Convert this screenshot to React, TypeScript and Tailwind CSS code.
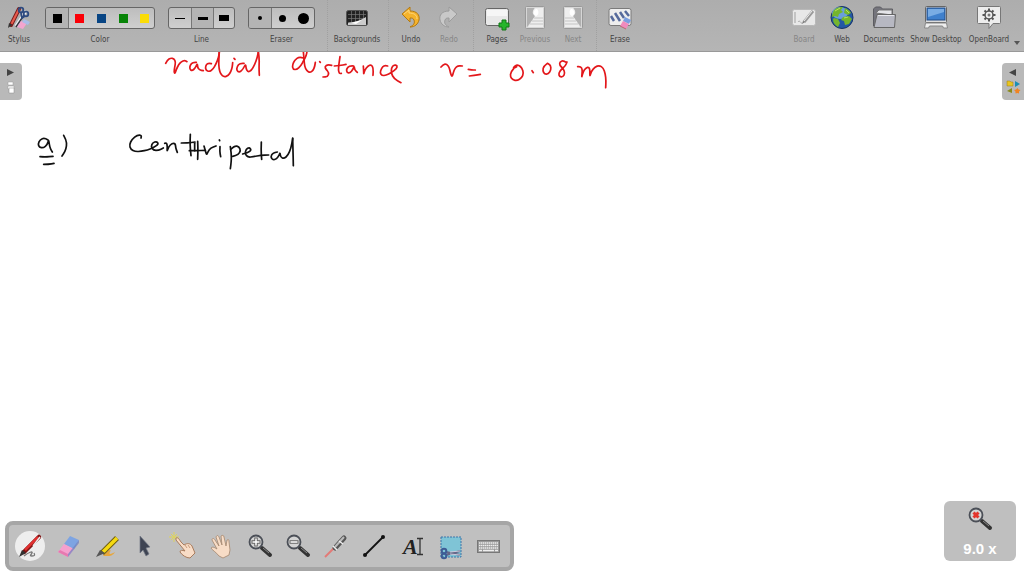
import type { ReactNode } from 'react'

type Point = [number, number]

interface Stroke {
  color: string
  points: Point[]
}

// Pen strokes are recorded as "x,y x,y ..." in thirds of a board pixel, relative to the origin of their line
function record(color: string, ox: number, oy: number, lines: string[]): Stroke[] {
  return lines.map(line => ({
    color,
    points: line.split(' ').map(p => {
      const [x, y] = p.split(',').map(Number)
      return [ox + x / 3, oy + y / 3] as Point
    }),
  }))
}

const STROKES: Stroke[] = [
  ...record('#e3171b', 150, 48, [
    '47,46 52,36 62,30 72,32 77,42 74,58 72,72 75,77 79,64 86,50 94,41 104,37 111,41',
    '139,43 129,42 120,52 119,63 126,69 136,60 142,46 143,58 148,66 160,68',
    '184,47 173,44 166,56 168,67 178,71 189,64 198,48 206,28 208,10',
    '208,10 206,40 207,62 212,79 222,87 235,83 243,70 247,56 248,44',
    '252,31 255,34',
    '282,46 270,45 261,56 260,68 268,73 279,64 287,47 288,62 294,72 304,68 314,50 322,28 325,10',
    '325,10 328,30 327,60 328,82',
    '460,30 448,26 434,36 427,52 429,64 440,65 452,54 461,38 469,22 471,10',
    '460,10 462,34 464,56 470,68 480,74 489,68 494,56 496,43',
    '509,41 511,43',
    '545,52 534,49 524,56 528,64 537,74 533,86 519,87',
    '570,26 567,46 565,66 568,77 574,76',
    '553,54 570,53 588,49',
    '611,54 598,53 589,63 591,74 600,75 609,64 613,54 614,66 622,73',
    '640,54 641,68 641,80 644,66 654,54 664,50 670,60 669,82',
    '713,54 703,51 694,62 690,74 696,83 708,82 724,74 740,62 742,53 732,50 724,60 724,76 732,92 753,104',
  ]),
  ...record('#e3171b', 420, 48, [
    '63,57 70,49 80,48 88,58 91,74 96,88 100,74 105,60 114,53 127,54',
    '145,64 156,66 166,66',
    '148,84 164,82 181,79',
    '281,62 272,72 271,86 278,96 292,98 305,90 311,76 306,60 296,51 286,52 278,62 290,56',
    '336,68 340,74',
    '382,46 371,54 368,68 374,79 385,78 393,66 392,52 382,46',
    '440,44 430,37 419,42 419,52 430,62 435,76 429,87 418,86 416,76 424,64 436,54 441,42',
    '473,56 482,55 487,64 486,78 485,89 489,72 498,59 507,57 510,68 509,87 514,70 525,57 538,52 550,60 556,78 558,98 557,119',
  ]),
  ...record('#111111', 20, 120, [
    '84,60 74,53 60,59 54,72 58,82 70,84 82,74 86,58 88,74 91,86 97,96',
    '60,110 76,111 99,109',
    '71,133 86,133 102,130',
    '131,46 139,60 140,78 135,95 126,108',
    '363,54 366,46 352,45 336,58 328,74 332,88 346,95 364,94 382,90 402,82 416,72 410,64 398,68 393,80 400,91 416,91 430,84',
    '434,70 440,68 442,80 441,96 446,80 456,70 466,70 467,84 472,97',
    '511,43 510,64 511,86 513,107',
    '484,69 504,69 525,66',
    '533,64 534,84 533,118',
    '508,92 530,92 556,91',
    '524,70 524,92',
    '552,78 556,92 560,106 564,94 572,84 588,78',
    '600,80 599,94 602,110',
    '598,60 599,62',
    '631,80 634,100 634,124 631,146',
    '632,88 644,77 657,80 662,92 655,104 638,109',
    '668,102 684,98 694,90 688,82 678,88 675,102 684,112 700,110 722,106 746,105',
    '724,66 723,90 725,118',
    '772,96 758,99 752,110 758,120 770,117 778,104 780,98 782,112 792,116 804,106 813,84 818,56',
    '818,54 819,90 820,137',
  ]),
]

function toPath(points: Point[]) {
  let d = `M${points[0][0]} ${points[0][1]}`
  for (let i = 1; i < points.length - 1; i++) {
    const [x, y] = points[i]
    const [nx, ny] = points[i + 1]
    d += `Q${x} ${y} ${(x + nx) / 2} ${(y + ny) / 2}`
  }
  const [lx, ly] = points[points.length - 1]
  return `${d}L${lx} ${ly}`
}

function Icon({ children, size = 26 }: { children: ReactNode; size?: 26 | 32 }) {
  return (
    <svg viewBox={`0 0 ${size} ${size}`} className={size === 26 ? 'size-[26px]' : 'size-8'} fill="none" aria-hidden="true">
      {children}
    </svg>
  )
}

const StylusIcon = () => (
  <Icon>
    <path d="M13 4L5 20" stroke="#7b2020" strokeWidth="4" strokeLinecap="round" />
    <path d="M13 4L6 18" stroke="#e85a4c" strokeWidth="2" strokeLinecap="round" />
    <path d="M3 18l-1 5 4-3z" fill="#333" />
    <path d="M20 6L10 21" stroke="#eef1f6" strokeWidth="3" />
    <path d="M18 10l-8 12" stroke="#33343c" strokeWidth="1.500" />
    <circle cx="15" cy="5" r="2.300" stroke="#2d4a80" strokeWidth="1.800" />
    <circle cx="20" cy="9" r="2.300" stroke="#2d4a80" strokeWidth="1.800" />
    <path d="M15 8l1 5 3-2" stroke="#2d4a80" strokeWidth="1.800" />
    <path d="M15 16l6 2-4 6-6-2z" fill="#f3a5cf" />
    <path d="M18 14l6 3-2 3-6-3z" fill="#a9bde8" />
  </Icon>
)

const BackgroundsIcon = () => (
  <Icon>
    <rect x="2.500" y="5.500" width="21" height="15" rx="2" fill="#222" stroke="#555" />
    <path d="M4 9.500h18M4 13.500h18M4 17.500h18M7.500 6v14M11.500 6v14M15.500 6v14M19.500 6v14" stroke="#777" strokeWidth=".7" />
    <path d="M4 20v-2c5-1 12-2 18-6v8z" fill="#ccc" />
    <path d="M7 18l11-3-6 4z" fill="#fff" />
  </Icon>
)

const ARROW = 'M4 9l8-7v4c7 0 10 4 9 9-1 4-4 7-9 7 4-2 5-4 4-7-1-2-2-2-4-2v4z'

const UndoIcon = () => (
  <Icon>
    <path d={ARROW} fill="#f5b32c" stroke="#b27812" strokeLinejoin="round" />
    <path d="M6 9l5-4v3c5 0 8 2 8 6" stroke="#ffd77c" />
  </Icon>
)

const RedoIcon = () => (
  <Icon>
    <path d={ARROW} transform="matrix(-1 0 0 1 25 0)" fill="#c9c9c9" stroke="#9c9c9c" strokeLinejoin="round" />
  </Icon>
)

const PagesIcon = () => (
  <Icon>
    <rect x="1.500" y="3.500" width="23" height="17" rx="2" fill="#e8e8e8" stroke="#666" />
    <path d="M3 5h20v6H3z" fill="#f6f6f6" />
    <path d="M18 15h4v3h3v4h-3v3h-4v-3h-3v-4h3z" fill="#25b52b" stroke="#127716" />
  </Icon>
)

function PageStepIcon({ flip }: { flip?: boolean }) {
  return (
    <Icon>
      <g transform={flip ? 'matrix(-1 0 0 1 26 0)' : undefined}>
        <rect x="3.500" y="1.500" width="19" height="22" rx="1" fill="#d6d6d6" stroke="#999" />
        <path d="M5 3h8c-3 3-1 6 1 7L5 22z" fill="#b0b0b0" />
        <path d="M13 3h8v19H6l7-11c-3-2-3-5 0-8z" fill="#eee" />
        <path d="M12 13h9M10 16h11M8 19h13" stroke="#c4c4c4" />
        <path d="M14 4c-3 2-3 6 0 7 3-1 3-5 1-7z" fill="#fff" />
      </g>
    </Icon>
  )
}

const EraseIcon = () => (
  <Icon>
    <rect x="2" y="3.500" width="22" height="17" rx="2" fill="#eee" stroke="#7a7a7a" />
    <path d="M4 11l3 5M8 8l5 8M13 7l4 6M18 6l4 5" stroke="#566a9c" strokeWidth="2.500" />
    <path d="M18 12l6 3-2 4-6-3z" fill="#7b9ee0" />
    <path d="M16 16l6 3-3 5-6-3z" fill="#f08bbd" />
    <path d="M13 21l6 3" stroke="#a55" strokeWidth=".7" />
  </Icon>
)

const BoardIcon = () => (
  <Icon>
    <rect x="1.500" y="4.500" width="23" height="16" rx="2" fill="#e8e8e8" stroke="#b8b8b8" />
    <path d="M4 7v11" stroke="#c4c4c4" strokeWidth="2" />
    <path d="M22 6L13 17" stroke="#999" strokeWidth="3" />
    <path d="M21 6L13 16" stroke="#eee" />
    <path d="M12 16l-1 3 3-2z" fill="#777" />
    <path d="M7 17c2-3 3 3 5 1" stroke="#aaa" />
  </Icon>
)

const WebIcon = () => (
  <Icon>
    <circle cx="13" cy="12.500" r="11" fill="#2358a5" stroke="#183466" />
    <ellipse cx="11" cy="8" rx="8" ry="6" fill="#6a9edb" />
    <path d="M5 5c3-3 6-3 9-3l-2 3 2 2-4 2-1 3-3-1-3 1c0-3 1-5 2-7zM16 3c3 1 5 3 6 5l-3 2-4-2zM14 12l6-1 3 3-3 5-4 1-1-4-3-1zM5 13l4 1 2 4-2 4c-3-2-5-4-5-8z" fill="#75b52d" />
    <path d="M6 6l5-3M17 5l3 3M15 13l4-1" stroke="#b9df5e" />
  </Icon>
)

const DocumentsIcon = () => (
  <Icon>
    <path d="M2.500 21V4l2-2h5l2 2h10v16z" fill="#74747c" stroke="#5c5c62" />
    <path d="M5 8l3-3h13v5z" fill="#e4e4e8" stroke="#777" />
    <path d="M3 22.500l3-13h18.500l-1 13z" fill="#b7b8c2" stroke="#666" />
    <path d="M7 10.500h16" stroke="#e8e8ee" />
  </Icon>
)

const DesktopIcon = () => (
  <Icon>
    <rect x="2.500" y="1.500" width="21" height="16" rx="1" fill="#ddd" stroke="#666" />
    <rect x="4" y="3" width="18" height="12" fill="#3f80cd" stroke="#224d87" />
    <path d="M5 4h16v3L5 12z" fill="#79ace4" />
    <path d="M2.500 18h21l1 5h-4l-1-2h-13l-1 2h-4z" fill="#eee" stroke="#888" />
  </Icon>
)

const OpenBoardIcon = () => (
  <Icon>
    <path d="M2.500 1.500h21a1 1 0 011 1v15a1 1 0 01-1 1H17l-4 5v-5H2.500a1 1 0 01-1-1v-15a1 1 0 011-1z" fill="#ededed" stroke="#777" />
    <path d="M13 3.500v13M6.500 10h13M8.500 5.500l9 9M17.500 5.500l-9 9" stroke="#555" strokeWidth="2" />
    <circle cx="13" cy="10" r="4" fill="#eee" stroke="#555" strokeWidth="1.500" />
    <circle cx="13" cy="10" r="1.500" fill="#777" />
  </Icon>
)

const PenIcon = () => (
  <Icon size={32}>
    <circle cx="16" cy="16" r="15" fill="#eee" />
    <path d="M10 26c5-4 9-5 8-3s-3 3 0 3 3-1 2-3" stroke="#777" strokeWidth="1.300" />
    <path d="M25 7L10 22" stroke="#7d1414" strokeWidth="4.500" strokeLinecap="round" />
    <path d="M24 7L11 20" stroke="#e03030" strokeWidth="2.500" />
    <path d="M26 7l-7 9" stroke="#eee" strokeWidth="1.500" />
    <path d="M8 20l4 3-7 4z" fill="#333" />
  </Icon>
)

const EraserIcon = () => (
  <Icon size={32}>
    <path d="M18 6l9 4-5 9-10-5z" fill="#7ea4e2" />
    <path d="M12 14l10 5-6 8-10-5z" fill="#f5a0ce" />
    <path d="M6 22l10 5v-3l-8-4z" fill="#e779b0" />
    <path d="M27 10v3L16 27v-3z" fill="#6d7fc0" opacity=".7" />
  </Icon>
)

const MarkerIcon = () => (
  <Icon size={32}>
    <path d="M12 26c6-7 9-7 7-4s2 2 5 0c-3 5-7 4-12 4z" fill="#e8a63a" />
    <path d="M26 8L11 23" stroke="#6c5a10" strokeWidth="5.500" />
    <path d="M26 8L12 22" stroke="#f5d911" strokeWidth="3.500" />
    <path d="M9 20l5 3-9 4z" fill="#555" />
  </Icon>
)

const SelectIcon = () => (
  <Icon size={32}>
    <path d="M11 6l10 11-4 1 3 6-3 2-3-6-3 3z" fill="#3e4453" stroke="#747a87" strokeWidth=".7" />
  </Icon>
)

const PlayIcon = () => (
  <Icon size={32}>
    <path d="M7 2v10M2 7h10M4 4l6 6M10 4l-6 6" stroke="#dfd45a" />
    <path d="M9 8c2-1 3 1 5 4l3 3c3-2 6-2 8 1l3 7-5 5c-4 0-8-3-10-6 0-2 2-2 5-1L9 10z" fill="#f8dcc6" stroke="#a87c5e" />
    <path d="M18 15l2 3M21 15l2 3" stroke="#c79b7b" />
  </Icon>
)

const HandIcon = () => (
  <Icon size={32}>
    <path d="M14 26c-3-4-7-6-8-8 2-2 4 0 6 1L7 10c0-2 2-2 3 0l4 6-3-9c1-2 2-2 3 0l3 8-1-9c1-1 3-1 3 1l2 9 1-6c2-1 2 0 2 2l1 8-1 5-6 3z" fill="#f7dcc6" stroke="#a5866d" strokeWidth=".8" />
  </Icon>
)

function MagnifierIcon({ kind }: { kind: 'in' | 'out' | 'reset' }) {
  return (
    <Icon size={32}>
      <path d="M18 18l8 7" stroke="#333" strokeWidth="4" strokeLinecap="round" />
      <path d="M19 18l6 5" stroke="#888" />
      <circle cx="12" cy="12" r="6.500" fill="#d4d4d4" stroke="#4b4f57" strokeWidth="1.800" />
      {kind === 'reset'
        ? <path d="M9.500 9.500l5 5M14.500 9.500l-5 5" stroke="#e3342c" strokeWidth="3" />
        : <path d={kind === 'in' ? 'M7.500 12h9M12 7.500v9' : 'M7.500 12h9'} stroke="#666" strokeWidth="3.500" />}
      {kind !== 'reset' && <path d={kind === 'in' ? 'M8.500 12h7M12 8.500v7' : 'M8.500 12h7'} stroke="#fff" strokeWidth="1.500" />}
    </Icon>
  )
}

const LaserIcon = () => (
  <Icon size={32}>
    <path d="M14 18L5 27" stroke="#e27a76" strokeWidth="2" />
    <path d="M24 8L15 18" stroke="#555" strokeWidth="5" strokeLinecap="round" />
    <path d="M24 7L15 17" stroke="#bbb" strokeWidth="2" />
    <path d="M19 11l4 3M13 16l4 4" stroke="#eee" strokeWidth="1.500" />
  </Icon>
)

const LineIcon = () => (
  <Icon size={32}>
    <path d="M7 25L25 7" stroke="#111" strokeWidth="1.800" />
    <circle cx="7" cy="25" r="2" fill="#111" />
    <circle cx="25" cy="7" r="2" fill="#111" />
  </Icon>
)

const TextIcon = () => (
  <Icon size={32}>
    <text x="6" y="24" fill="#222" className="font-['Liberation_Serif',serif] text-[22px] font-bold italic">A</text>
    <path d="M20 8.500h6M20 24.500h6M23 8.500v16" stroke="#333" strokeWidth="1.300" />
  </Icon>
)

const CaptureIcon = () => (
  <Icon size={32}>
    <rect x="6" y="7" width="20" height="20" fill="#7fc4d6" stroke="#3d75a8" strokeDasharray="2 1" />
    <path d="M11 22l14 3M11 25l14-4" stroke="#668" strokeWidth="2" />
    <path d="M15 22l10-1M15 24l10 1" stroke="#ccd" />
    <circle cx="9" cy="21" r="2.300" stroke="#3e5c95" strokeWidth="2" />
    <circle cx="9" cy="26" r="2.300" stroke="#3e5c95" strokeWidth="2" />
  </Icon>
)

const KeyboardIcon = () => (
  <Icon size={32}>
    <rect x="4.500" y="10.500" width="22" height="12" fill="#999" stroke="#777" />
    <path d="M6 13h19M6 15.500h19M6 18h19" stroke="#eee" strokeWidth="1.500" strokeDasharray="1.500 .5" />
    <path d="M6 20.500h3M10 20.500h11M22 20.500h3" stroke="#eee" strokeWidth="1.500" />
  </Icon>
)

interface ToolButtonProps {
  label: string
  icon: ReactNode
  width?: string
  disabled?: boolean
}

function ToolButton({ label, icon, width = 'w-[38px]', disabled }: ToolButtonProps) {
  return (
    <button disabled={disabled} className={`flex shrink-0 flex-col items-center gap-1 whitespace-nowrap pt-[5px] ${width} ${disabled ? 'text-[#868686]' : 'text-[#444]'}`}>
      {icon}
      <span>{label}</span>
    </button>
  )
}

function ToolGroup({ label, names, selected, children }: { label: string; names: string[]; selected: number; children: ReactNode[] }) {
  return (
    <div role="group" aria-label={label} className="flex shrink-0 flex-col items-center gap-1.5 pt-[7px] text-[#444]">
      <div className="flex h-[22px] overflow-hidden rounded-[3px] border border-[#666] bg-linear-to-b from-[#bdbdbd] to-[#cfcfcf]">
        {children.map((child, i) => (
          <button
            key={names[i]}
            aria-label={names[i]}
            aria-pressed={i === selected}
            className={`flex items-center justify-center ${names.length === 5 ? 'w-[22px] last:w-5' : 'w-[22px] last:w-[21px]'} ${i === selected ? 'bg-[#b4b4b4] shadow-[1px_0_0_#777]' : ''} ${i === selected && i > 0 ? 'border-l border-[#777]' : ''}`}
          >
            {child}
          </button>
        ))}
      </div>
      <span>{label}</span>
    </div>
  )
}

const Separator = () => <div className="w-px shrink-0 border-l border-dotted border-[#a0a0a0]" />

const SWATCHES = ['bg-black', 'bg-[#fb0007]', 'bg-[#084584]', 'bg-[#078407]', 'bg-[#fbdc07]']

const PALETTE = [
  { name: 'Pen', icon: <PenIcon /> },
  { name: 'Eraser', icon: <EraserIcon /> },
  { name: 'Marker', icon: <MarkerIcon /> },
  { name: 'Select', icon: <SelectIcon /> },
  { name: 'Interact', icon: <PlayIcon /> },
  { name: 'Scroll page', icon: <HandIcon /> },
  { name: 'Zoom in', icon: <MagnifierIcon kind="in" /> },
  { name: 'Zoom out', icon: <MagnifierIcon kind="out" /> },
  { name: 'Laser pointer', icon: <LaserIcon /> },
  { name: 'Draw line', icon: <LineIcon /> },
  { name: 'Write text', icon: <TextIcon /> },
  { name: 'Capture', icon: <CaptureIcon /> },
  { name: 'Virtual keyboard', icon: <KeyboardIcon /> },
]

function Toolbar() {
  return (
    <header className="flex h-[52px] justify-between border-b border-[#999] bg-linear-to-b from-[#adadad] to-[#b5b5b5] font-['DejaVu_Sans_Condensed','DejaVu_Sans',sans-serif] text-[8px] leading-[10px]">
      <div className="flex">
        <ToolButton label="Stylus" icon={<StylusIcon />} />
        <div className="flex gap-[13px] pr-3 pl-[7px]">
          <ToolGroup label="Color" names={['Black', 'Red', 'Blue', 'Green', 'Yellow']} selected={0}>
            {SWATCHES.map(s => <span key={s} className={`size-[9px] ${s}`} />)}
          </ToolGroup>
          <ToolGroup label="Line" names={['Fine', 'Medium', 'Strong']} selected={1}>
            <span className="h-px w-[10px] bg-black" />
            <span className="h-[3px] w-[10px] bg-black" />
            <span className="h-[6px] w-[10px] bg-black" />
          </ToolGroup>
          <ToolGroup label="Eraser" names={['Small', 'Medium', 'Large']} selected={0}>
            <span className="size-1 rounded-full bg-black" />
            <span className="size-[7px] rounded-full bg-black" />
            <span className="size-[11px] rounded-full bg-black" />
          </ToolGroup>
        </div>
        <Separator />
        <ToolButton label="Backgrounds" icon={<BackgroundsIcon />} width="w-[60px] pr-0.5" />
        <Separator />
        <div className="flex pr-[5px] pl-[3px]">
          <ToolButton label="Undo" icon={<UndoIcon />} />
          <ToolButton label="Redo" icon={<RedoIcon />} disabled />
        </div>
        <Separator />
        <div className="flex px-1">
          <ToolButton label="Pages" icon={<PagesIcon />} />
          <ToolButton label="Previous" icon={<PageStepIcon />} disabled />
          <ToolButton label="Next" icon={<PageStepIcon flip />} disabled />
        </div>
        <Separator />
        <div className="flex px-1">
          <ToolButton label="Erase" icon={<EraseIcon />} />
        </div>
      </div>
      <div className="flex pr-[3px]">
        <ToolButton label="Board" icon={<BoardIcon />} disabled />
        <ToolButton label="Web" icon={<WebIcon />} />
        <ToolButton label="Documents" icon={<DocumentsIcon />} width="w-[46px]" />
        <ToolButton label="Show Desktop" icon={<DesktopIcon />} width="w-[58px]" />
        <ToolButton label="OpenBoard" icon={<OpenBoardIcon />} width="w-12" />
        <button aria-label="More" className="flex w-2 items-end pb-1.5">
          <svg viewBox="0 0 8 4" className="h-1 w-2" aria-hidden="true"><path d="M1 0h6L4 4z" fill="#555" /></svg>
        </button>
      </div>
    </header>
  )
}

export default function App() {
  return (
    <div className="flex min-h-screen flex-col bg-white">
      <Toolbar />
      <main className="relative flex flex-1 flex-col justify-between overflow-hidden">
        <svg viewBox="0 52 640 130" className="absolute top-0 left-0 h-[130px] w-[640px]" fill="none" role="img" aria-label="radial distance r = 0.08 m, a) centripetal">
          {STROKES.map((s, i) => (
            <path key={i} d={toPath(s.points)} stroke={s.color} strokeWidth="1.700" strokeLinecap="round" strokeLinejoin="round" />
          ))}
        </svg>

        <div className="flex justify-between pt-[11px]">
          <button aria-label="Show pages" className="flex h-[37px] w-[22px] items-center justify-center rounded-r bg-[#b9b9b9]">
            <svg viewBox="0 0 22 37" className="h-[37px] w-[22px]" aria-hidden="true">
              <path d="M7 6l7 3.500L7 13z" fill="#444" />
              <path d="M8 19h5v3H8zM8 23h6v3H8z" fill="#fff" stroke="#999" strokeWidth=".5" />
              <path d="M9 25h5v5H9z" fill="#fff" stroke="#888" strokeWidth=".5" />
            </svg>
          </button>
          <button aria-label="Show library" className="flex h-[37px] w-[22px] items-center justify-center rounded-l bg-[#b9b9b9]">
            <svg viewBox="0 0 22 37" className="h-[37px] w-[22px]" aria-hidden="true">
              <path d="M14 6L7 9.500l7 3.500z" fill="#444" />
              <path d="M5 18h3l1 1h2v4H5z" fill="#e9c51f" stroke="#9b7d18" strokeWidth=".5" />
              <path d="M13 18l5 3-5 3z" fill="#1b8fb5" />
              <path d="M10 25v5l-5-2z" fill="#8a8a1c" />
              <path d="M15.500 25l1 1.500 2 .5-1.500 1.500v2l-1.500-.5-2 .5v-2L12 27l2-.5z" fill="#f08423" />
            </svg>
          </button>
        </div>

        <div className="flex items-end justify-between pr-2 pb-[5px] pl-[5px]">
          <div role="toolbar" aria-label="Stylus palette" className="flex h-[50px] w-[509px] items-center justify-between rounded-lg border-4 border-[#a6a6a6] bg-[#c0c0c0] px-[5px]">
            {PALETTE.map(tool => (
              <button key={tool.name} aria-label={tool.name} className="size-8">{tool.icon}</button>
            ))}
          </div>
          <button className="mb-2.5 flex h-[60px] w-[72px] flex-col items-center rounded-md bg-[#bfbfbf] pt-0.5 font-['Liberation_Sans',sans-serif] text-[15px] leading-5 font-bold text-white">
            <MagnifierIcon kind="reset" />
            <span className="mt-1">9.0 x</span>
          </button>
        </div>
      </main>
    </div>
  )
}
